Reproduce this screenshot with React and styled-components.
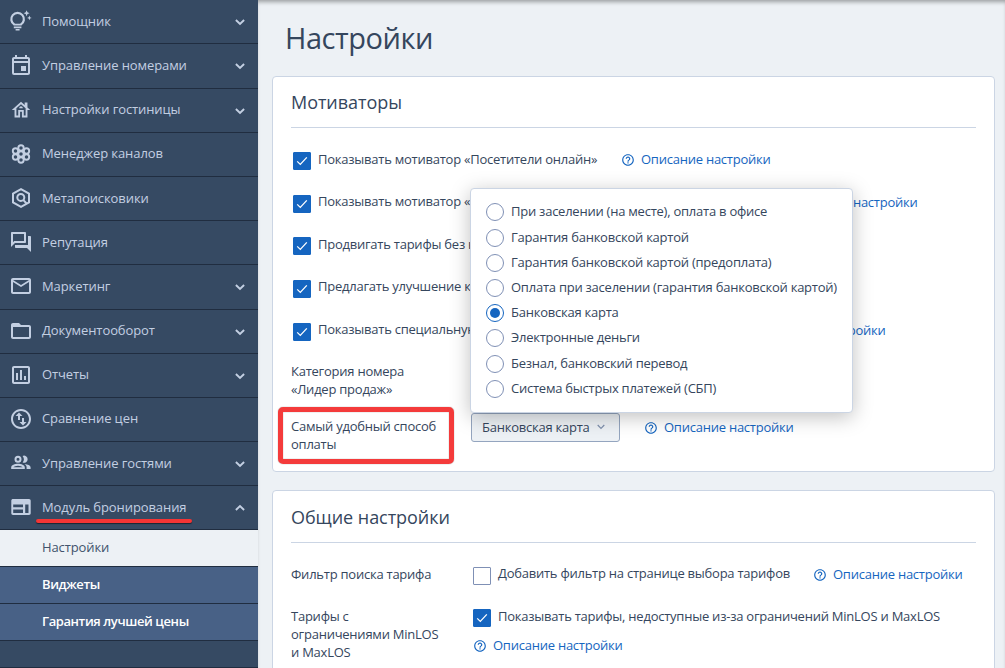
import React from 'react';
import styled, { createGlobalStyle } from 'styled-components';
import {
    MdOutlineEvent,
    MdOutlineHouse,
    MdOutlineForum,
    MdMailOutline,
    MdFolderOpen,
    MdOutlineAssessment,
    MdOutlineSwapVerticalCircle,
    MdHelpOutline,
} from 'react-icons/md';

const BulbIcon = () => (
    <svg width="24" height="24" viewBox="0 0 24 24" fill="currentColor">
        <path d="M5.4 15.6a6.3 6.3 0 1 1 6.4 0" fill="none" stroke="currentColor" strokeWidth="2.2" />
        <path d="M4.8 14.8h7.6v1.8H4.8zM4.8 17.6h7.6v1.6H4.8zM6.6 20h4v1.4h-4z" />
        <path d="m17.6 1.2.9 2.1 2.1.9-2.1.9-.9 2.1-.9-2.100-2.100-.9 2.100-.9zM20.400 6.600l.7 1.600 1.600.7-1.600.7-.7 1.600-.7-1.600-1.600-.7 1.600-.7z" />
    </svg>
);

const HiveIcon = () => (
    <svg width="24" height="24" viewBox="0 0 24 24" fill="none" stroke="currentColor" strokeWidth="1.9">
        <circle cx="12" cy="12" r="2.7" />
        <circle cx="12" cy="5.9" r="2.7" />
        <circle cx="12" cy="18.1" r="2.7" />
        <circle cx="6.5" cy="9" r="2.7" />
        <circle cx="17.5" cy="9" r="2.7" />
        <circle cx="6.5" cy="15" r="2.7" />
        <circle cx="17.5" cy="15" r="2.7" />
    </svg>
);

const MetaIcon = () => (
    <svg width="24" height="24" viewBox="0 0 24 24" fill="none" stroke="currentColor" strokeWidth="2">
        <path d="M12 3.2 20 7.6V16.4L12 20.8 4 16.4V7.6Z" />
        <circle cx="11.8" cy="11.4" r="3.5" />
        <path d="M14.2 13.9 17.8 17.8" />
    </svg>
);

const GuestsIcon = () => (
    <svg width="24" height="24" viewBox="0 0 24 24" fill="currentColor">
        <circle cx="9" cy="8.2" r="2.5" fill="none" stroke="currentColor" strokeWidth="2" />
        <path d="M13.6 4.9a3.6 3.6 0 1 1 0 6.6 5.3 5.3 0 0 0 0-6.6z" />
        <path
            fillRule="evenodd"
            d="M2.2 18v-1.8c0-2 3.6-3.4 6.8-3.4s6.8 1.4 6.8 3.4V18zm2.2-1.7h9.2c-.7-.8-2.7-1.6-4.6-1.6s-3.9.8-4.6 1.6z"
        />
        <path d="M15.6 13c3 .3 6 1.5 6 3.4V18h-4v-1.8c0-1.3-.8-2.4-2-3.2z" />
    </svg>
);

const ModuleIcon = () => (
    <svg width="24" height="24" viewBox="0 0 24 24" fill="currentColor">
        <path
            fillRule="evenodd"
            d="M4 4h16c1 0 1.7.8 1.7 1.7v12.6c0 1-.8 1.7-1.7 1.7H4c-1 0-1.7-.8-1.7-1.7V5.7C2.3 4.700 3 4 4 4zM4.200 9.600v2.600h9.800V9.600zM4.200 14.500V18h9.800v-3.500zM16.200 9.600V18h3.300V9.600z"
        />
    </svg>
);

const Chevron = ({ up }) => (
    <svg width="10" height="8" viewBox="0 0 10 8" fill="none" stroke="currentColor" strokeWidth="1.9">
        <path d={up ? 'M.9 6 5 2 9.1 6' : 'M.9 2 5 6 9.1 2'} />
    </svg>
);

const menu = [
    { text: 'Помощник', icon: <BulbIcon />, arrow: true },
    { text: 'Управление номерами', icon: <MdOutlineEvent />, arrow: true, height: 45 },
    { text: 'Настройки гостиницы', icon: <MdOutlineHouse viewBox="-1 -1 26 26" />, arrow: true, lift: true },
    { text: 'Менеджер каналов', icon: <HiveIcon />, lift: true },
    { text: 'Метапоисковики', icon: <MetaIcon /> },
    { text: 'Репутация', icon: <MdOutlineForum /> },
    { text: 'Маркетинг', icon: <MdMailOutline />, arrow: true, height: 45 },
    { text: 'Документооборот', icon: <MdFolderOpen />, arrow: true, lift: true },
    { text: 'Отчеты', icon: <MdOutlineAssessment />, arrow: true, lift: true },
    { text: 'Сравнение цен', icon: <MdOutlineSwapVerticalCircle />, lift: true },
    { text: 'Управление гостями', icon: <GuestsIcon />, arrow: true },
    { text: 'Модуль бронирования', icon: <ModuleIcon />, arrow: true, open: true },
];

const motivators = [
    { text: 'Показывать мотиватор «Посетители онлайн»', width: 304, link: true, height: 43 },
    { text: 'Показывать мотиватор «Брони»', width: 451, link: true, height: 42, lift: true },
    { text: 'Продвигать тарифы без комиссии', height: 43 },
    { text: 'Предлагать улучшение категории', height: 43, lift: true },
    { text: 'Показывать специальную цену', width: 419, link: true, height: 43, lift: true },
];

const payments = [
    'При заселении (на месте), оплата в офисе',
    'Гарантия банковской картой',
    'Гарантия банковской картой (предоплата)',
    'Оплата при заселении (гарантия банковской картой)',
    'Банковская карта',
    'Электронные деньги',
    'Безнал, банковский перевод',
    'Система быстрых платежей (СБП)',
];

const Check = ({ checked }) => (
    <Box $checked={checked}>
        {checked && (
            <svg width="12" height="10" viewBox="0 0 12 10" fill="none" stroke="#fff" strokeWidth="1.3">
                <path d="M1.2 5.4 4.3 8.4 10.8 1.4" />
            </svg>
        )}
    </Box>
);

const HelpLink = () => (
    <Help href="#">
        <MdHelpOutline />
        <span>Описание настройки</span>
    </Help>
);

export default function App() {
    return (
        <Page>
            <GlobalStyle />
            <Sidebar>
                {menu.map((item) => (
                    <MenuItem key={item.text} $height={item.height}>
                        {item.icon}
                        <MenuText $marked={item.open} $lift={item.lift}>{item.text}</MenuText>
                        {item.arrow && <Chevron up={item.open} />}
                    </MenuItem>
                ))}
                <SubItem $active>Настройки</SubItem>
                <SubItem>Виджеты</SubItem>
                <SubItem>Гарантия лучшей цены</SubItem>
                <MenuItem $height={27} />
            </Sidebar>
            <Main>
                <Title>Настройки</Title>
                <Card $height={396}>
                    <CardTitle>Мотиваторы</CardTitle>
                    <Motivators>
                        {motivators.map((m) => (
                            <CheckRow key={m.text} $height={m.height}>
                                <Check checked />
                                <CheckText $width={m.width} $lift={m.lift}>{m.text}</CheckText>
                                {m.link && <HelpLink />}
                            </CheckRow>
                        ))}
                    </Motivators>
                    <Field $height={55}>
                        <Label>Категория номера «Лидер продаж»</Label>
                    </Field>
                    <Field>
                        <Label $outlined>Самый удобный способ оплаты</Label>
                        <SelectWrap>
                            <Select>
                                Банковская карта
                                <svg width="8" height="6" viewBox="0 0 8 6" fill="none" stroke="#7f90ad" strokeWidth="1.2">
                                    <path d="M.7 1 4 4.4 7.3 1" />
                                </svg>
                            </Select>
                            <Dropdown>
                                {payments.map((p) => (
                                    <Option key={p}>
                                        <Radio $checked={p === 'Банковская карта'} />
                                        <OptionText>{p}</OptionText>
                                    </Option>
                                ))}
                            </Dropdown>
                            <HelpLink />
                        </SelectWrap>
                    </Field>
                </Card>
                <Card $height={230}>
                    <CardTitle $height={52}>Общие настройки</CardTitle>
                    <General>
                        <Field $height={42}>
                            <Label>Фильтр поиска тарифа</Label>
                            <Control>
                                <Check />
                                <CheckText $width={316} $lift>Добавить фильтр на странице выбора тарифов</CheckText>
                                <HelpLink />
                            </Control>
                        </Field>
                        <Field>
                            <Label>Тарифы с ограничениями MinLOS и MaxLOS</Label>
                            <div>
                                <Control>
                                    <Check checked />
                                    <CheckText>Показывать тарифы, недоступные из-за ограничений MinLOS и MaxLOS</CheckText>
                                </Control>
                                <UnderLink>
                                    <HelpLink />
                                </UnderLink>
                            </div>
                        </Field>
                    </General>
                </Card>
            </Main>
        </Page>
    );
}

const GlobalStyle = createGlobalStyle`
    *, *::before, *::after {
        box-sizing: border-box;
    }
    body {
        margin: 0;
        overflow: hidden;
        font-family: "Open Sans", sans-serif;
        font-size: 13px;
        line-height: 18px;
        letter-spacing: -0.24px;
        color: #35465d;
    }
`;

const Page = styled.div`
    display: flex;
    height: 668px;
    overflow: hidden;
    background: #edf1f5;
`;

const Sidebar = styled.nav`
    width: 258px;
    flex-shrink: 0;
    background: #364a63;
`;

const MenuItem = styled.div`
    display: flex;
    align-items: center;
    height: ${(p) => p.$height || 44}px;
    padding: 0 13px 2px 9px;
    border-bottom: 1px solid #202d40;
    color: #c3cfe2;
    > svg:first-child {
        width: 24px;
        height: 24px;
        flex-shrink: 0;
    }
    > svg:last-child:not(:first-child) {
        margin-top: 2px;
    }
`;

const MenuText = styled.span`
    position: relative;
    flex: 1;
    margin-left: 9px;
    padding-bottom: ${(p) => (p.$lift ? '2px' : 0)};
    font-weight: 500;
    letter-spacing: -0.09px;
    &::after {
        content: '';
        display: ${(p) => (p.$marked ? 'block' : 'none')};
        position: absolute;
        left: -6px;
        top: 21px;
        width: 156px;
        height: 4px;
        border-radius: 2px;
        background: #f43535;
        box-shadow: 0 1px 1px rgba(0, 0, 0, 0.5);
    }
`;

const SubItem = styled.div`
    display: flex;
    align-items: center;
    height: 37px;
    padding: 0 0 2px 42px;
    border-bottom: 1px solid #202d40;
    background: ${(p) => (p.$active ? '#edf1f5' : '#486186')};
    color: ${(p) => (p.$active ? '#41536c' : '#fff')};
    font-weight: ${(p) => (p.$active ? 400 : 600)};
    letter-spacing: ${(p) => (p.$active ? '-0.1px' : '-0.4px')};
`;

const Main = styled.main`
    flex: 1;
    padding: 0 10px 0 14px;
    box-shadow: inset 0 4px 4px -2px rgba(0, 0, 0, 0.35);
`;

const Title = styled.h1`
    height: 76px;
    margin: 0;
    padding: 19px 0 0 13px;
    font-size: 29px;
    line-height: 38px;
    font-weight: 400;
    letter-spacing: -0.45px;
`;

const Card = styled.section`
    height: ${(p) => p.$height}px;
    margin-bottom: 18px;
    padding: 0 18px;
    border: 1px solid #cbd5e4;
    border-radius: 4px;
    background: #fff;
`;

const CardTitle = styled.h2`
    height: ${(p) => p.$height || 51}px;
    margin: 0;
    padding-top: ${(p) => (p.$height ? 14 : 13)}px;
    border-bottom: 1px solid #cbd5e4;
    font-size: 18px;
    line-height: 24px;
    font-weight: 400;
    letter-spacing: -0.05px;
`;

const Motivators = styled.div`
    padding: 23px 0 0 2px;
    margin-bottom: -2px;
`;

const CheckRow = styled.div`
    display: flex;
    height: ${(p) => p.$height}px;
`;

const Box = styled.span`
    display: flex;
    align-items: center;
    justify-content: center;
    flex-shrink: 0;
    width: 18px;
    height: 18px;
    margin-top: 1px;
    border: 1px solid ${(p) => (p.$checked ? '#1565c0' : '#7f90b5')};
    border-radius: 1px;
    background: ${(p) => (p.$checked ? '#1565c0' : '#fff')};
`;

const CheckText = styled.span`
    width: ${(p) => (p.$width ? p.$width + 'px' : 'auto')};
    margin: ${(p) => (p.$lift ? -2 : -1)}px 0 0 7px;
    white-space: nowrap;
    flex-shrink: 0;
`;

const Help = styled.a`
    display: flex;
    height: 18px;
    margin-top: -1px;
    color: #1565c0;
    text-decoration: none;
    white-space: nowrap;
    svg {
        width: 14px;
        height: 14px;
        margin: 3px 6px 0 -1px;
    }
`;

const Field = styled.div`
    display: flex;
    height: ${(p) => (p.$height ? p.$height + 'px' : 'auto')};
`;

const Label = styled.div`
    position: relative;
    width: 180px;
    height: 54px;
    flex-shrink: 0;
    margin-top: -1px;
    padding-right: 26px;
    &::after {
        content: '';
        display: ${(p) => (p.$outlined ? 'block' : 'none')};
        position: absolute;
        left: -13px;
        top: -10px;
        width: 176px;
        height: 57px;
        border: 5px solid #f43b3b;
        border-radius: 5px;
        box-shadow: 0 0 1px rgba(0, 0, 0, 0.6), inset 0 0 1px rgba(0, 0, 0, 0.6);
    }
`;

const SelectWrap = styled.div`
    position: relative;
    display: flex;
    align-items: center;
    height: 29px;
    margin-top: -5px;
    gap: 25px;
`;

const Select = styled.button`
    display: flex;
    align-items: center;
    justify-content: space-between;
    width: 149px;
    height: 29px;
    padding: 0 14px 2px 10px;
    border: 1px solid #94a5bf;
    border-radius: 3px;
    background: #edf1f5;
    color: inherit;
    font: inherit;
    letter-spacing: inherit;
    white-space: nowrap;
`;

const Dropdown = styled.div`
    position: absolute;
    left: -1px;
    bottom: 29px;
    width: 383px;
    height: 225px;
    padding: 10.8px 0 0 15px;
    border: 1px solid #cbd5e4;
    border-radius: 4px;
    background: #fff;
    box-shadow: 0 4px 20px rgba(0, 0, 0, 0.25);
`;

const Option = styled.label`
    display: flex;
    align-items: center;
    height: 25.2px;
    white-space: nowrap;
`;

const OptionText = styled.span`
    padding-bottom: 2px;
`;

const Radio = styled.span`
    width: 18px;
    height: 18px;
    margin-right: 7px;
    padding: 3px;
    border: 1px solid ${(p) => (p.$checked ? '#1565c0' : '#7f90b5')};
    border-radius: 50%;
    &::before {
        content: '';
        display: block;
        width: 10px;
        height: 10px;
        border-radius: 50%;
        background: ${(p) => (p.$checked ? '#1565c0' : 'transparent')};
    }
`;

const General = styled.div`
    padding-top: 23px;
`;

const Control = styled.div`
    display: flex;
    padding-left: 2px;
`;

const UnderLink = styled.div`
    padding: 10px 0 0 3px;
`;
